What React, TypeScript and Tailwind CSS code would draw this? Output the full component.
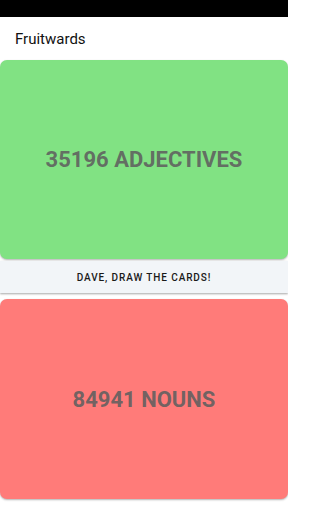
export default function App() {
  return (
    <div className="w-[288px] h-[512px] bg-white flex flex-col font-['Roboto',sans-serif] overflow-hidden">
      {/* status bar */}
      <div className="h-[17px] bg-black" />

      {/* app bar */}
      <div className="h-[43px] flex items-center px-[15px] pt-[2px] bg-white">
        <span className="text-[15px] text-[#111]">Fruitwards</span>
      </div>

      {/* adjectives card */}
      <div className="h-[199px] rounded-[7px] bg-[#81e283] shadow-[0_1px_2px_rgba(0,0,0,0.3)] flex items-center justify-center">
        <span className="text-[22px] font-bold text-[#5f5f5f]/90">35196 ADJECTIVES</span>
      </div>

      {/* draw button */}
      <div className="mt-[2px] h-[32px] bg-[#f2f5f8] shadow-[0_1px_2px_rgba(0,0,0,0.35)] flex items-center justify-center">
        <span className="text-[10px] font-medium tracking-[0.09em] text-[#1a1a1a]">DAVE, DRAW THE CARDS!</span>
      </div>

      {/* nouns card */}
      <div className="mt-[6px] h-[200px] rounded-[7px] bg-[#ff7b79] shadow-[0_1px_2px_rgba(0,0,0,0.3)] flex items-center justify-center">
        <span className="text-[22px] font-bold text-[#5f5f5f]/90">84941 NOUNS</span>
      </div>
    </div>
  );
}
